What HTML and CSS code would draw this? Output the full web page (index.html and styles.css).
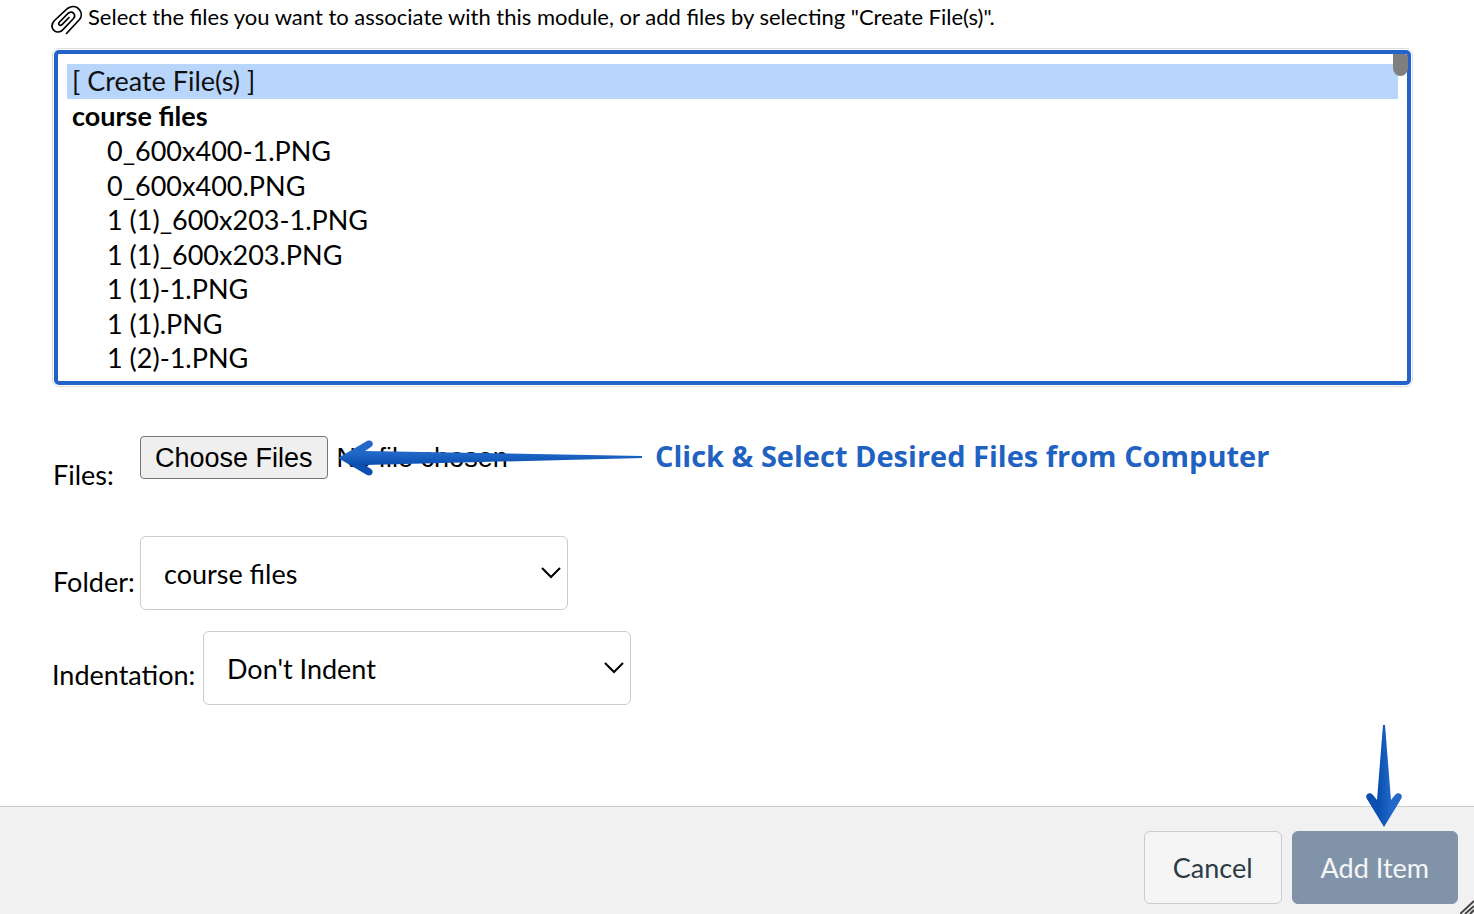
FILE: index.html
```html
<!DOCTYPE html>
<html lang="en">
<head>
    <meta charset="UTF-8">
    <meta name="viewport" content="width=device-width, initial-scale=1.0">
    <title>Add Item to Module</title>
    <link rel="stylesheet" href="styles.css">
</head>
<body>
    <form class="dialog">
        <div class="content">
            <div class="intro">
                <svg class="clip" width="32" height="30" viewBox="0 0 32 30" aria-hidden="true">
                    <path stroke-width="1.700" d="M15.500 28.500 L28.500 14.500 C34 7.500 25.500 -2.500 16.500 3.500 L3.500 15.500 C-2.500 22 4 30.500 11 25.500 L22.500 13.500 C25.500 9.500 21.500 5.500 17.500 8 L8.500 17 C6.500 19.500 9 21.500 11.300 19.300 L18 12.500"/>
                </svg>
                <label for="file-list">Select the files you want to associate with this module, or add files by selecting "Create File(s)".</label>
            </div>

            <div class="list-box">
                <select id="file-list" size="9">
                    <option selected>[ Create File(s) ]</option>
                    <optgroup label="course files">
                        <option>0_600x400-1.PNG</option>
                        <option>0_600x400.PNG</option>
                        <option>1 (1)_600x203-1.PNG</option>
                        <option>1 (1)_600x203.PNG</option>
                        <option>1 (1)-1.PNG</option>
                        <option>1 (1).PNG</option>
                        <option>1 (2)-1.PNG</option>
                    </optgroup>
                </select>
                <span class="thumb"></span>
            </div>

            <div class="row files-row">
                <label for="files">Files:</label>
                <div class="file-field">
                    <input type="file" id="files" multiple>
                    <div class="callout">
                        <svg width="305" height="36" viewBox="0 0 305 36" aria-hidden="true">
                            <defs>
                                <linearGradient id="blue-h" x1="0" y1="0" x2="0" y2="1">
                                    <stop offset="0.35" stop-color="#2168c9"/>
                                    <stop offset="0.7" stop-color="#0b50b0"/>
                                </linearGradient>
                            </defs>
                            <path fill="url(#blue-h)" d="M0 18 L29 1 C34 -1 37 4 33 7 L27 11 L304 16 V18 L27 25 L33 29 C37 32 33 37 29 35 Z"/>
                        </svg>
                        <strong>Click &amp; Select Desired Files from Computer</strong>
                    </div>
                </div>
            </div>

            <div class="row folder-row">
                <label for="folder">Folder:</label>
                <div class="dropdown">
                    <select id="folder">
                        <option>course files</option>
                    </select>
                    <svg width="20" height="12" viewBox="0 0 20 12" aria-hidden="true"><path d="M1 1 L10 10 L19 1"/></svg>
                </div>
            </div>

            <div class="row indent-row">
                <label for="indent">Indentation:</label>
                <div class="dropdown">
                    <select id="indent">
                        <option>Don't Indent</option>
                    </select>
                    <svg width="20" height="12" viewBox="0 0 20 12" aria-hidden="true"><path d="M1 1 L10 10 L19 1"/></svg>
                </div>
            </div>
        </div>

        <div class="footer">
            <button type="button" class="btn">Cancel</button>
            <div class="submit">
                <button type="submit" class="btn primary">Add Item</button>
                <svg class="pointer" width="36" height="102" viewBox="0 0 36 102" aria-hidden="true">
                    <defs>
                        <linearGradient id="blue-v" x1="0" y1="0" x2="1" y2="0">
                            <stop offset="0.35" stop-color="#0b50b0"/>
                            <stop offset="0.7" stop-color="#2168c9"/>
                        </linearGradient>
                    </defs>
                    <path fill="url(#blue-v)" d="M18 102 L1 74 C-2 69 4 66 7 70 L11 75 L17 0 H19 L25 75 L29 70 C32 66 38 69 35 74 Z"/>
                </svg>
            </div>
            <svg class="grip" width="14" height="14" viewBox="0 0 14 14" aria-hidden="true">
                <path d="M0 14 L14 1 M5 14 L14 6 M10 14 L14 10"/>
            </svg>
        </div>
    </form>
</body>
</html>
```
FILE: styles.css
```css
* {
    box-sizing: border-box;
}
body {
    margin: 0;
    background: #fff;
    color: #000;
    font-family: Lato, sans-serif;
    font-size: 27px;
}
.dialog {
    display: flex;
    flex-direction: column;
    min-height: 100vh;
}
.content {
    flex: 1;
    padding: 4px 61px 0 52px;
}
.intro {
    display: flex;
    gap: 5px;
    height: 44px;
    font-size: 22px;
    line-height: 26px;
}
.clip {
    flex: none;
    margin-left: -1px;
    margin-top: 1px;
    fill: none;
    stroke: #000;
    stroke-linecap: round;
}

/* file list */
.list-box {
    position: relative;
}
.list-box select {
    display: block;
    width: 100%;
    height: 339px;
    padding: 15px 14px 0;
    border: 1px solid #ddd;
    border-radius: 7px;
    outline: 4px solid #2362c6;
    outline-offset: -6px;
    background: #fff;
    color: #000;
    font: inherit;
    overflow: hidden;
    scrollbar-width: none;
}
.list-box option {
    min-height: 0;
    padding: 0 0 2px 5px;
}
.list-box optgroup {
    padding-left: 3px;
    font-weight: bold;
}
.list-box optgroup option {
    padding: 1px 0 1px 37px;
    font-weight: normal;
}
.list-box optgroup option:nth-of-type(even) {
    padding-bottom: 0;
}
.list-box option:checked {
    background: linear-gradient(#b8d6fb, #b8d6fb);
}
.thumb {
    position: absolute;
    top: 6px;
    right: 5px;
    width: 15px;
    height: 22px;
    border-radius: 0 4px 8px 8px;
    background: #7f7f7f;
}

/* form rows */
.row {
    display: flex;
    align-items: flex-end;
}
.row label {
    line-height: 34px;
}
.files-row {
    margin-top: 49px;
}
.files-row label,
.folder-row label {
    width: 88px;
    padding-left: 1px;
}
.file-field {
    position: relative;
    flex: 1;
    height: 56px;
}
input[type="file"] {
    display: block;
    width: 420px;
    font-family: "Liberation Sans", Arial, sans-serif;
    font-size: 27px;
}
input[type="file"]::file-selector-button {
    height: 43px;
    margin-right: 9px;
    padding: 2px 14px 0;
    border: 1px solid #767676;
    border-radius: 4px;
    background: #efefef;
    color: #000;
    font: inherit;
}
.callout {
    position: absolute;
    top: 4px;
    left: 198px;
    display: flex;
    align-items: center;
    gap: 12px;
    color: #1f62c1;
    font-family: "Open Sans", sans-serif;
    font-size: 29px;
    line-height: 32px;
    white-space: nowrap;
}
.callout strong {
    padding-bottom: 4px;
}
.folder-row {
    margin-top: 44px;
}
.folder-row label {
    padding-bottom: 11px;
}
.indent-row {
    margin-top: 21px;
}
.indent-row label {
    width: 151px;
    padding-bottom: 13px;
}
.dropdown {
    position: relative;
    width: 428px;
}
.dropdown select {
    display: block;
    appearance: none;
    width: 100%;
    height: 74px;
    padding: 0 40px 0 23px;
    border: 1px solid #c7cdd1;
    border-radius: 6px;
    background: #fff;
    color: #000;
    font: inherit;
}
.dropdown svg {
    position: absolute;
    top: 31px;
    right: 7px;
    fill: none;
    stroke: #000;
    stroke-width: 2;
    pointer-events: none;
}

/* footer */
.footer {
    position: relative;
    display: flex;
    justify-content: flex-end;
    gap: 10px;
    padding: 24px 16px 10px;
    border-top: 1px solid #c7cdd1;
    background: #f1f1f1;
}
.btn {
    height: 73px;
    padding: 0 28px;
    border: 1px solid #c7cdd1;
    border-radius: 6px;
    background: #f5f5f5;
    color: #2d3b45;
    font: inherit;
    cursor: pointer;
}
.btn.primary {
    border-color: #8193a8;
    background: #8193a8;
    color: #f5f6f8;
}
.submit {
    position: relative;
}
.pointer {
    position: absolute;
    bottom: 77px;
    right: 56px;
}
.grip {
    position: absolute;
    right: 0;
    bottom: 0;
    fill: none;
    stroke: #444;
    stroke-width: 2;
}
```
